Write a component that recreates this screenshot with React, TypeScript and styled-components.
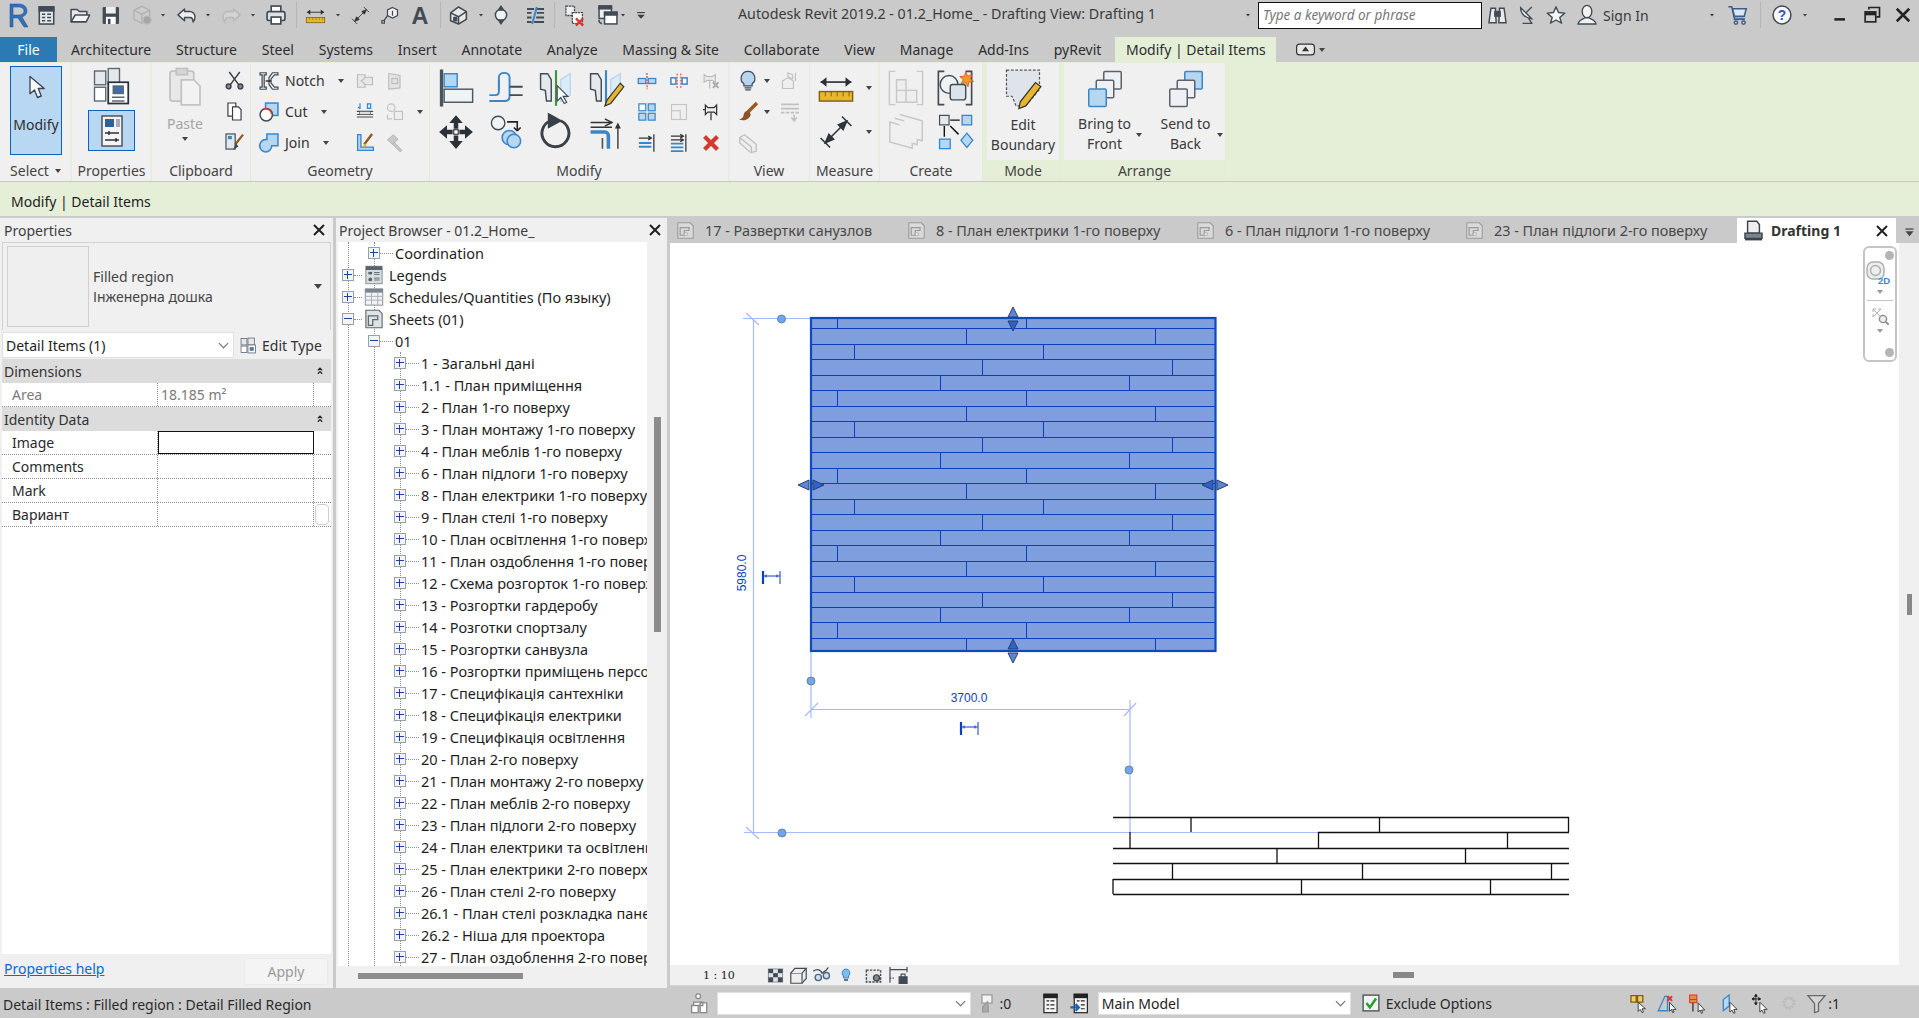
import React from "react";
import styled, { createGlobalStyle } from "styled-components";

const UI_FONT = `"Noto Sans", "Open Sans", "Liberation Sans", sans-serif`;
const DK = "#414b55";
const MD = "#87919b";
const LT = "#e6e9ec";
const BL = "#3a86c8";
const LB = "#b7d7f1";
const RED = "#d8382c";

const GlobalStyle = createGlobalStyle`
    html, body { margin: 0; padding: 0; height: 100%; overflow: hidden; background: #cacaca; }
    #root { height: 100%; }
    * { box-sizing: border-box; }
`;

// every drawing sits on a 32x32 grid and gets scaled by the size prop
const art: Record<string, React.ReactNode> = {
    caret: <polygon points="8,12 24,12 16,22" fill="#3c3c3c" />,
    project: (<g stroke={DK} strokeWidth="2.4"><rect x="5" y="3" width="22" height="26" fill={LT} /><rect x="5" y="3" width="22" height="6" fill={DK} /><path d="M9 14h5M17 14h6M9 19h5M17 19h6M9 24h5M17 24h6" /></g>),
    open: (<g stroke={DK} strokeWidth="2.2" fill="#e8e8e8" strokeLinejoin="round"><path d="M3 26V8h9l3 3h11v5" /><path d="M9 16h21l-5 10H3z" fill="#f4f4f4" /></g>),
    save: (<g><rect x="4" y="3" width="25" height="26" rx="2" fill={DK} /><rect x="9" y="3" width="15" height="10" fill="#eee" /><rect x="9" y="18" width="15" height="11" fill="#fff" /><rect x="12" y="21" width="4" height="8" fill={DK} /></g>),
    sync: (<g fill="#cfcfcf" stroke="#9c9c9c" strokeWidth="2"><polygon points="15,2 27,8 27,22 15,28 3,22 3,8" /><path d="M3 8l12 6 12-6M15 14v14" fill="none" /><circle cx="23" cy="23" r="6" fill="#888" stroke="#aaa" /></g>),
    undo: (<path d="M13 6 3 15l10 9v-5h8c3 0 5 2 5 7 2-2 3-5 3-8 0-5-4-8-8-8h-8z" fill="#eee" stroke={DK} strokeWidth="2.2" strokeLinejoin="round" />),
    redo: (<path d="M19 6l10 9-10 9v-5h-8c-3 0-5 2-5 7-2-2-3-5-3-8 0-5 4-8 8-8h8z" fill="#ddd" stroke="#aaa" strokeWidth="2.2" strokeLinejoin="round" />),
    print: (<g stroke={DK} strokeWidth="2.4"><rect x="9" y="3" width="14" height="9" fill="#fff" /><rect x="3" y="11" width="26" height="13" rx="3" fill="#dfe2e5" /><rect x="9" y="19" width="14" height="10" fill="#fff" /></g>),
    ruler: (<g><path d="M3 11h26" stroke="#2b2f33" strokeWidth="1.4" /><path d="M3 11l5-4v8zM29 11l-5-4v8z" fill="#2b2f33" /><rect x="2" y="19" width="28" height="8" fill="#e7b72e" stroke="#80620f" strokeWidth="1.2" /><path d="M7 19v4M12 19v4M17 19v4M22 19v4M27 19v4" stroke="#80620f" strokeWidth=".8" /></g>),
    align2: (<g stroke="#2f353b" strokeWidth="1.3"><path d="M7 25 25 7M3 21l8 8M21 3l8 8" /><polygon points="7,25 14,22 10,18" fill="#2f353b" /><polygon points="25,7 18,10 22,14" fill="#2f353b" /></g>),
    tag: (<g stroke={DK} strokeWidth="2" fill="#f2f2f2"><polygon points="20,4 28,8 28,17 20,21 12,17 12,8" /><path d="M20 9v8M5 27l7-10" /><rect x="3" y="25" width="4" height="4" /></g>),
    textA: (<text x="16" y="29" fontSize="34" fontWeight="700" textAnchor="middle" fill={DK} fontFamily="Liberation Sans, sans-serif">A</text>),
    house: (<g stroke={DK} strokeWidth="2.4" fill="#e8e8e8" strokeLinejoin="round"><polygon points="4,12 16,3 28,10 28,22 16,29 4,24" /><path d="M4 12l12 6 12-8M16 18v11" fill="none" /><rect x="9" y="19" width="4" height="5" fill={DK} /></g>),
    section: (<g stroke={DK} strokeWidth="2.4"><circle cx="16" cy="16" r="9" fill="#f2f2f2" /><polygon points="16,2 12,8 20,8" fill={DK} /><polygon points="16,30 12,24 20,24" fill={DK} /></g>),
    thin: (<g stroke={DK} strokeWidth="3"><path d="M3 6h11M18 6h11M3 12h7M18 12h11M3 19h7M17 19h12M3 26h7M14 26h15" /><path d="M18 3 11 29" stroke={BL} /></g>),
    closeinact: (<g><rect x="4" y="3" width="12" height="13" fill="#eee" stroke={DK} strokeWidth="1.8" strokeDasharray="3 1" /><rect x="13" y="12" width="14" height="15" fill="#fff" stroke={DK} strokeWidth="1.8" strokeDasharray="3 1" /><path d="M18 20l10 10M28 20 18 30" stroke={RED} strokeWidth="3.2" /></g>),
    tabs: (<g stroke={DK} strokeWidth="2.2"><rect x="3" y="3" width="18" height="18" fill="#eee" /><rect x="3" y="3" width="18" height="4" fill={DK} /><rect x="11" y="12" width="18" height="17" fill="#fff" /><rect x="11" y="12" width="18" height="4" fill={DK} /><path d="M3 26l4 3M3 26v-3" /></g>),
    custom: (<g fill="#3c3c3c"><rect x="6" y="8" width="20" height="3" /><polygon points="6,15 26,15 16,26" /></g>),
    binoc: (<g stroke={DK} strokeWidth="2.2" fill="#eaeaea"><path d="M6 5h7v7l1 15H3L5 12z" /><path d="M19 5h7l1 7 2 15H18l1-15z" /><rect x="12" y="10" width="8" height="7" fill={DK} /></g>),
    dish: (<g stroke={DK} strokeWidth="2" fill="#eee"><path d="M7 4c0 9 7 16 17 17z" /><path d="M15 12l9-9M10 28h14l-5-8" fill="none" /></g>),
    star: (<polygon points="16,3 20,12 30,13 22,20 25,29 16,24 7,29 10,20 2,13 12,12" fill="#f6f6f6" stroke={DK} strokeWidth="2.2" strokeLinejoin="round" />),
    user: (<g stroke={DK} strokeWidth="2" fill="#f2f2f2"><ellipse cx="16" cy="11" rx="7" ry="9" /><path d="M3 29c1-6 8-7 10-9h6c2 2 9 3 10 9z" /></g>),
    cart: (<g stroke="#3c5a8a" strokeWidth="2.2" fill="#dbe6f3"><path d="M2 4h5l4 18h15" fill="none" /><path d="M8 7h20l-3 11H11z" /><circle cx="13" cy="27" r="2.4" /><circle cx="24" cy="27" r="2.4" /></g>),
    help: (<g><circle cx="16" cy="16" r="13" fill="#f8f8f8" stroke={DK} strokeWidth="2.2" /><text x="16" y="23" fontSize="20" fontWeight="700" textAnchor="middle" fill="#2c55b8" fontFamily="Liberation Sans, sans-serif">?</text></g>),
    minimize: <rect x="7" y="21" width="17" height="4" fill="#222" />,
    restore: (<g fill="none" stroke="#222" strokeWidth="2.6"><rect x="5" y="11" width="17" height="16" /><path d="M5 14h17" strokeWidth="5" /><path d="M11 7V4h17v15h-5" /></g>),
    close: <path d="M6 6l20 20M26 6 6 26" stroke="#222" strokeWidth="4" />,
    pointer: (<path d="M8 2v23l6-5 4 10 5-2-4-10h8z" fill="#f6f8fa" stroke="#3c4650" strokeWidth="1.8" strokeLinejoin="round" />),
    familyType: (<g stroke="#5c6670" strokeWidth="1.1"><rect x="2" y="4" width="9" height="11" fill={LT} /><rect x="13" y="2" width="9" height="12" fill={LT} /><rect x="2" y="17" width="9" height="11" fill="#fff" /><rect x="13" y="13" width="16" height="17" fill="#fff" stroke="#2a3138" strokeWidth="1.4" /><rect x="17" y="16" width="8" height="6" fill="#3f6ea8" /><path d="M16 25h10M16 28h10" /></g>),
    propPanel: (<g><rect x="6" y="1" width="20" height="30" fill="#f4f4f4" stroke="#2a3138" strokeWidth="1.2" /><rect x="9" y="4" width="9" height="8" fill="#2f5f9c" /><rect x="20" y="4" width="4" height="8" fill="#aab" /><path d="M9 18h14M9 25h14M13 16v4M20 23v4" stroke="#2a3138" strokeWidth="1.4" /></g>),
    paste: (<g stroke="#c2c2c2" strokeWidth="1.4" fill="#e8e8e8"><rect x="4" y="4" width="19" height="24" rx="2" /><rect x="9" y="2" width="9" height="5" fill="#d5d5d5" /><path d="M13 11h10l5 5v15H13z" fill="#f2f2f2" /></g>),
    scissors: (<g stroke="#3a3f45" strokeWidth="2.2" fill="none"><path d="M8 3l14 19M24 3 10 22" /><circle cx="7" cy="25" r="3.6" fill="#889" /><circle cx="25" cy="25" r="3.6" fill="#889" /></g>),
    copy: (<g stroke="#3a3f45" strokeWidth="1.8" fill="#fff"><path d="M6 3h12v20H6z" /><path d="M13 9h9l4 4v16H13z" /></g>),
    match: (<g><rect x="3" y="3" width="14" height="23" fill="#e4e8f0" stroke={DK} strokeWidth="1.8" /><rect x="6" y="6" width="6" height="5" fill={BL} /><path d="M29 4 17 19" stroke="#8a5a20" strokeWidth="3.4" /><path d="M18 17l-4 10 8-5z" fill="#444" /></g>),
    notch: (<g stroke={DK} strokeWidth="1.8" fill="#f0f0f0"><path d="M3 4h9v3H9v18h3v3H3v-3h3V7H3z" /><path d="M29 4h-8l-5 7v10l5 7h8v-3h-5l-5-6v-6l5-6h5z" /><path d="M19 16h-8" stroke="#111" /></g>),
    cutGeo: (<g stroke={BL} strokeWidth="2.2"><rect x="11" y="3" width="18" height="18" fill={LB} /><circle cx="12" cy="20" r="9" fill="#fff" stroke={DK} /><path d="M8 12a9 9 0 0 1 12 7" stroke={RED} fill="none" /></g>),
    joinGeo: (<g stroke={BL} strokeWidth="2.2" fill={LB}><path d="M13 3h16v17H20a9 9 0 0 1-9 9A9 9 0 0 1 4 15 9 9 0 0 1 13 11z" /></g>),
    wallJoin: (<g stroke="#bbb" strokeWidth="1.8" fill="#e8e8e8"><path d="M4 6h12v20H4z" /><path d="M28 10H17l-7 6 7 6h11z" /></g>),
    wallFace: (<g stroke="#bbb" strokeWidth="1.8" fill="#e4e4e4"><path d="M6 4l18 3v20L6 29z" /><rect x="11" y="12" width="9" height="8" /></g>),
    offsetFace: (<g><path d="M3 15h26M3 20h26M3 24h26" stroke={DK} strokeWidth="1.8" /><rect x="7" y="15" width="18" height="5" fill="#ddd" stroke={DK} /><path d="M8 2v9M8 11l-3-3M20 3h5v7h-5z" stroke={BL} strokeWidth="2" fill="none" /></g>),
    joinCut: (<g stroke="#c0c0c0" strokeWidth="1.8" fill="#eee"><circle cx="10" cy="9" r="6" /><rect x="15" y="15" width="13" height="13" /><path d="M4 20v7h7" fill="none" /></g>),
    paint: (<g><path d="M4 4v24h24v-5H9V4z" fill={LB} stroke={BL} strokeWidth="2" /><path d="M26 3 14 19" stroke="#8a5a20" strokeWidth="3.6" /><path d="M15 17l-4 7 7-3z" fill="#e7b72e" /></g>),
    hammer: (<g fill="#c8c8c8" stroke="#b4b4b4" strokeWidth="1.6"><path d="M4 11 13 3l8 7-9 8z" /><path d="M15 15l12 13-3 2-12-12z" /></g>),
    alignTool: (<g stroke="#4b555f" strokeWidth="1.2"><rect x="3" y="1" width="1.6" height="30" fill="#4b555f" /><rect x="6" y="4" width="11" height="11" fill={LB} stroke={BL} /><rect x="6" y="17" width="24" height="11" fill="#f0f3f6" /></g>),
    offsetTool: (<g fill="none" strokeWidth="1.6"><path d="M2 27h13c2 0 4-1 4-4V7c0-5-9-5-9 0v12c0 2-1 3-3 3H2" stroke={BL} /><path d="M19 15h11M19 22h11" stroke={DK} /><path d="M10 9v9" stroke={BL} /></g>),
    mirrorPick: (<g><path d="M3 4h6l3 5v18H8l-1-9-4-1z" fill={LT} stroke={DK} strokeWidth="1.2" /><path d="M16 1v30" stroke="#3a9a3a" strokeWidth="1.8" /><path d="M20 9l8-5v18l-8 5z" fill="#dbecf8" stroke={LB} strokeWidth="1.2" /><path d="M17 14v13l3-3 3 5 2-1-3-5h4z" fill="#fff" stroke={DK} strokeWidth="1" /></g>),
    mirrorDraw: (<g><path d="M3 4h6l3 5v18H8l-1-9-4-1z" fill={LT} stroke={DK} strokeWidth="1.2" /><path d="M16 1v28" stroke={BL} strokeWidth="1.8" /><path d="M20 9l8-5v14l-8 5z" fill="#dbecf8" stroke={LB} strokeWidth="1.2" /><path d="M28 12 17 26l-2 5 5-2 11-14z" fill="#e7b72e" stroke="#333" strokeWidth="1" /></g>),
    move: (<g fill="#2c3137"><rect x="14" y="14" width="4" height="4" fill="#fff" stroke="#2c3137" /><path d="M16 1l6 7h-4v5h-4V8h-4zM16 31l-6-7h4v-5h4v5h4zM1 16l7-6v4h5v4H8v4zM31 16l-7 6v-4h-5v-4h5v-4z" /></g>),
    copyTool: (<g><circle cx="9" cy="8" r="6" fill="#f0f3f6" stroke={DK} strokeWidth="1.2" /><path d="M17 7h9v8M26 15l-3-3M26 15l3-3" stroke="#222" strokeWidth="1.4" fill="none" /><circle cx="19" cy="21" r="6.4" fill={LB} stroke={BL} strokeWidth="1.4" /><circle cx="23" cy="24" r="6" fill={LB} stroke={BL} strokeWidth="1.4" /></g>),
    rotate: (<g fill="none" stroke="#3a4047" strokeWidth="2.6"><path d="M11 6a12 12 0 1 0 9 0" /><polygon points="10,1 19,6 10,11" fill="#3a4047" /></g>),
    trim: (<g><path d="M3 8h18M3 12h18" stroke="#333" strokeWidth="1.2" /><path d="M15 5l6 3-6 3" fill="none" stroke="#333" strokeWidth="1.2" /><path d="M3 16h12c2 0 3 2 3 3v11" stroke={BL} strokeWidth="3" fill="none" /><path d="M13 21v9M26 30V12" stroke="#555" strokeWidth="1.4" /><polygon points="26,8 23.5,13 28.5,13" fill="#333" /></g>),
    splitTool: (<g><rect x="2" y="12" width="12" height="8" fill={LB} stroke={BL} strokeWidth="2" /><rect x="18" y="12" width="12" height="8" fill={LB} stroke={BL} strokeWidth="2" /><path d="M16 3v26" stroke={RED} strokeWidth="2" strokeDasharray="3 2" /></g>),
    gapTool: (<g><rect x="3" y="11" width="8" height="10" fill="#fff" stroke={BL} strokeWidth="2.4" /><rect x="21" y="11" width="8" height="10" fill="#fff" stroke={BL} strokeWidth="2.4" /><path d="M13 4v24M19 4v24" stroke={RED} strokeWidth="1.6" strokeDasharray="3 2" /></g>),
    unpin: (<g><path d="M5 6l5 3h8l5-3v12l-5-3h-8l-5 3z" fill="#eee" stroke="#b8b8b8" strokeWidth="1.8" /><path d="M14 16v12" stroke="#b8b8b8" strokeWidth="1.8" /><path d="M19 18l9 9M28 18l-9 9" stroke="#a8a8a8" strokeWidth="3" /></g>),
    array: (<g strokeWidth="2"><rect x="3" y="3" width="11" height="11" fill="#fff" stroke={BL} /><rect x="18" y="3" width="11" height="11" fill={LB} stroke={BL} /><rect x="3" y="18" width="11" height="11" fill={LB} stroke={BL} /><rect x="18" y="18" width="11" height="11" fill={LB} stroke={BL} /></g>),
    scale: (<g stroke="#c4c4c4" strokeWidth="1.8" fill="#efefef"><rect x="4" y="4" width="24" height="24" /><rect x="4" y="14" width="14" height="14" /></g>),
    pin: (<g stroke="#333" strokeWidth="2" fill="#eee"><path d="M7 5l4 4h10l4-4v15l-4-4H11l-4 4z" /><path d="M16 17v12M3 12h4" fill="none" /></g>),
    extend1: (<g strokeWidth="2"><path d="M27 2v28" stroke="#333" /><path d="M3 8h20M18 5l5 3-5 3" fill="none" stroke="#333" /><path d="M3 16h20M3 22h20" stroke={BL} strokeWidth="3" /></g>),
    extend2: (<g strokeWidth="2"><path d="M27 2v28" stroke="#333" /><path d="M3 5h20M18 2l5 3-5 3M3 11h20M18 8l5 3-5 3" fill="none" stroke="#333" /><path d="M3 17h20M3 23h20M3 29h20" stroke={BL} strokeWidth="3" /></g>),
    deleteX: <path d="M4 8l4-4 8 8 8-8 4 4-8 8 8 8-4 4-8-8-8 8-4-4 8-8z" fill={RED} stroke="#a52018" />,
    bulb: (<g stroke={DK} strokeWidth="1.8"><path d="M16 2a10 10 0 0 1 6 18v3H10v-3A10 10 0 0 1 16 2z" fill={LB} /><path d="M11 26h10M12 29h8" /></g>),
    hideIso: (<g stroke="#c0c0c0" strokeWidth="1.6" fill="#eee"><path d="M5 16l8-5 8 5v11H5z" /><path d="M13 4l7 3v6l-7-3zM24 4v12" /></g>),
    brush: (<g><path d="M29 3 16 16" stroke="#9a5a20" strokeWidth="5" /><path d="M16 14c-6 0-6 6-7 9-1 2-4 3-6 4 7 3 16 0 17-8z" fill="#8a5226" /></g>),
    graphics: (<g stroke="#c0c0c0" strokeWidth="2.4"><path d="M3 5h26M3 11h26" /><path d="M3 17h26" strokeDasharray="5 2" /><path d="M22 20v8M18 24l4 5 4-5" fill="none" /></g>),
    wire: (<g stroke="#bdbdbd" strokeWidth="1.8" fill="#eee"><path d="M4 8l7-4 17 14v10l-8 2L4 16z" /><path d="M4 8l17 14v8" fill="none" /></g>),
    createGroupOff: (<g stroke="#c8c8c8" strokeWidth="1.2" fill="#eee"><path d="M7 2H2v28h5M25 2h5v28h-5" fill="none" /><path d="M8 9h8v9H8zM8 18h8v10H8zM16 18h9v10h-9z" /></g>),
    createSimilar: (<g><path d="M7 2H2v28h5M25 2h5v28h-5" fill="none" stroke={DK} strokeWidth="1.4" /><circle cx="11" cy="13" r="7.5" fill="#eef2f5" stroke={DK} strokeWidth="1.2" /><rect x="12" y="13" width="13" height="13" rx="2" fill="#dde3ea" stroke={DK} strokeWidth="1.2" /><path d="M25 2l1.6 4 4-1.6-1.6 4 2.6 2-4 .6-.6 4-2-3.4-4 1 2-3.6-3-2.6 4-.4z" fill="#f29a1e" stroke={RED} strokeWidth=".6" /></g>),
    partsOff: (<g stroke="#c8c8c8" strokeWidth="1.2" fill="#f0f0f0"><path d="M3 8l18 5v16L3 24z" /><path d="M7 5l18 5v16l-4-1" /><path d="M11 2l18 5v16l-4-1" /></g>),
    flow: (<g><rect x="3" y="2" width="8" height="8" fill={LT} stroke={DK} strokeWidth="1" /><rect x="22" y="2" width="8" height="8" fill={LB} stroke={BL} strokeWidth="1.1" /><rect x="3" y="22" width="9" height="8" fill={LB} stroke={BL} strokeWidth="1.1" /><polygon points="26,17 31,23 26,29 21,23" fill={LB} stroke={BL} strokeWidth="1.1" /><path d="M12 6h8M7 11v9M12 11l7 7" stroke="#111" strokeWidth="1.2" /></g>),
    editBoundary: (<g><path d="M4 3h24v14l-10 12H11l-3-7H4z" fill="#dfe3ea" stroke="#555" strokeWidth=".9" strokeDasharray="2 1.2" /><path d="M29 15 18 29l-5 2 1-5 11-14z" fill="#e7b72e" stroke="#333" strokeWidth=".9" /></g>),
    front: (<g strokeWidth="1.2"><rect x="15" y="2" width="14" height="14" rx="1" fill="#eef0f3" stroke="#5a636c" /><rect x="9" y="9" width="14" height="14" rx="1" fill="#eef0f3" stroke="#5a636c" /><rect x="3" y="16" width="14" height="14" rx="1" fill={LB} stroke={BL} /></g>),
    back: (<g strokeWidth="1.2"><rect x="15" y="2" width="14" height="14" rx="1" fill={LB} stroke={BL} /><rect x="9" y="9" width="14" height="14" rx="1" fill="#eef0f3" stroke="#5a636c" /><rect x="3" y="16" width="14" height="14" rx="1" fill="#eef0f3" stroke="#5a636c" /></g>),
    sheet: (<g><path d="M3 3h21l5 5v21H3z" fill="#dadada" stroke="#9a9a9a" strokeWidth="1.8" /><path d="M7 24V11h15v5h-8v8z" fill="none" stroke="#9a9a9a" strokeWidth="2" /><path d="M14 20h5v4h-5z" fill="#fff" stroke="#9a9a9a" strokeWidth="1.2" /></g>),
    sheetDark: (<g><path d="M3 2h21l5 5v23H3z" fill="#dfe3e6" stroke="#5e6870" strokeWidth="1.8" /><path d="M7 26V11h15v6h-8v9z" fill="none" stroke="#5e6870" strokeWidth="2" /></g>),
    legends: (<g><rect x="3" y="2" width="26" height="28" fill="#d8dde1" stroke="#7b858e" strokeWidth="1.4" /><rect x="3" y="2" width="26" height="6" fill="#59636c" /><rect x="7" y="11" width="6" height="4" fill="#59636c" /><path d="M16 12h9M16 15h9M16 21h9M16 24h9" stroke="#59636c" strokeWidth="1.4" /><circle cx="10" cy="23" r="3" fill="#59636c" /></g>),
    schedule: (<g><rect x="2" y="3" width="28" height="26" fill="#f0f2f4" stroke="#7b858e" strokeWidth="1.4" /><rect x="2" y="3" width="28" height="6" fill="#7b858e" /><path d="M2 15h28M2 21h28M12 9v20M22 9v20" stroke="#a4acb3" strokeWidth="1.4" /></g>),
    drafting: (<g stroke="#3a424a" strokeWidth="2.2" fill="#eee"><path d="M7 2h14l4 5v13H7z" /><path d="M3 20h26v8H3z" fill="#7a848d" /><path d="M3 30h26" /></g>),
    editType: (<g stroke="#5c6670" strokeWidth="1.5"><rect x="2" y="3" width="11" height="12" fill={LT} /><rect x="15" y="2" width="12" height="13" fill={LT} /><rect x="2" y="17" width="11" height="12" fill="#fff" /><rect x="15" y="15" width="14" height="15" fill="#fff" /><rect x="19" y="20" width="6" height="5" fill={BL} /></g>),
    collapse: <path d="M9 14l7-7 7 7M9 25l7-7 7 7" fill="none" stroke="#222" strokeWidth="4" />,
    menu: (<g fill="#444"><rect x="6" y="6" width="20" height="3" /><polygon points="6,13 26,13 16,25" /></g>),
    panelToggle: (<g><rect x="1" y="7" width="30" height="18" rx="5" fill="#e8e8e8" stroke="#333" strokeWidth="2" /><polygon points="16,11 22,19 10,19" fill="#333" /></g>),
    detail: (<g><rect x="4" y="5" width="24" height="22" fill="#e2e2e2" stroke={MD} strokeWidth="1.6" /><rect x="4" y="5" width="8" height="7" fill={DK} /><rect x="20" y="5" width="8" height="7" fill={DK} /><rect x="12" y="12" width="8" height="7" fill={DK} /><rect x="4" y="19" width="8" height="8" fill={DK} /><rect x="20" y="19" width="8" height="8" fill={DK} /></g>),
    cube: (<g stroke={DK} strokeWidth="2" fill="#eee"><path d="M3 12h19v17H3z" /><path d="M3 12l7-8h19l-7 8M29 4v17l-7 8" /></g>),
    sun: (<g fill="none" strokeWidth="2.2"><path d="M2 10c7-5 12-2 14 3 4-2 8-5 10-9" stroke={DK} /><circle cx="10" cy="20" r="5" stroke="#4a6a88" fill="#cfe0ee" /><circle cx="23" cy="17" r="5" stroke="#4a6a88" fill="#cfe0ee" /></g>),
    bulbBlue: (<g><path d="M16 4a8 8 0 0 1 5 14v4H11v-4A8 8 0 0 1 16 4z" fill="#7dbcf0" stroke="#3a86c8" strokeWidth="2" /><path d="M12 26h8" stroke={DK} strokeWidth="3" /></g>),
    crop: (<g stroke={DK} strokeWidth="2.4"><rect x="4" y="7" width="24" height="20" fill="#e8e8e8" strokeDasharray="4 2" /><circle cx="21" cy="20" r="5" fill="#888" /></g>),
    viewLock: (<g stroke={DK} strokeWidth="1.8"><path d="M3 3v24M29 3v8M3 7h26" fill="none" /><path d="M3 20h8" strokeDasharray="2 2" /><rect x="17" y="18" width="12" height="10" fill={DK} /><path d="M20 18v-4h6v4" fill="none" /></g>),
    worksets: (<g fill="#fff" stroke="#8a8a8a" strokeWidth="2"><circle cx="14" cy="5" r="3.6" /><path d="M7 14h14v5H7zM4 19h10v11H4zM17 15h10v15H17z" /></g>),
    editReq: (<g fill="#aaa" stroke="#9a9a9a" strokeWidth="2"><path d="M8 3h16v13H8z" fill="#f4f4f4" /><path d="M17 14l-8 8v8h9v-8z" /></g>),
    wsA: (<g stroke="#222" strokeWidth="1.8"><rect x="6" y="2" width="20" height="28" fill="#f4f4f4" /><rect x="6" y="2" width="20" height="5" fill="#222" /><path d="M10 12h4M16 12h6M10 18h4M16 18h6M10 24h4M16 24h6" /></g>),
    wsB: (<g stroke="#222" strokeWidth="1.8"><rect x="8" y="2" width="20" height="28" fill="#f4f4f4" /><rect x="8" y="2" width="20" height="5" fill="#222" /><path d="M12 12h4M18 12h6M18 18h6M18 24h6" /><path d="M2 22h12M10 17l5 5-5 5" stroke="#1d5fb0" strokeWidth="3.4" fill="none" /></g>),
    check: (<g><rect x="2" y="2" width="28" height="28" fill="#eef3f6" stroke="#4a5157" strokeWidth="2.4" /><path d="M8 16l6 8 11-16" fill="none" stroke="#2a9a28" strokeWidth="4.4" /></g>),
    stLinks: (<g><path d="M3 4h8v10H3zM13 4h8v10h-8z" fill="#f2cf60" stroke="#7a6010" strokeWidth="2" /><path d="M14 14v14l3-3 3 5 2-1-2-5h5z" fill="#fff" stroke="#333" strokeWidth="1.4" /></g>),
    stUnder: (<g><path d="M2 27 12 5h4v22z" fill="none" stroke={BL} strokeWidth="2" /><path d="M16 5l7 7M23 5l-7 7" stroke={RED} strokeWidth="3" /><path d="M19 14v14l3-3 2 5 2-1-2-4h5z" fill="#fff" stroke="#333" strokeWidth="1.4" /></g>),
    stPin: (<g><path d="M4 3h11v7H4zM4 10h11v5H4z" fill="#e09040" stroke={RED} strokeWidth="1.6" /><path d="M9 15v13" stroke="#333" strokeWidth="2" /><path d="M17 15v14l3-3 2 5 2-1-2-4h5z" fill="#fff" stroke="#333" strokeWidth="1.4" /></g>),
    stFace: (<g><path d="M5 27V10l9-7v17z" fill={LB} stroke={BL} strokeWidth="2" /><path d="M15 14v15l3-3 3 5 2-1-2-5h5z" fill="#fff" stroke="#333" strokeWidth="1.4" /></g>),
    stDrag: (<g><path d="M9 2v16M3 9h13M9 2l-2 3h4zM3 9l3-2v4zM16 9l-3-2v4zM9 18l-2-3h4z" stroke="#222" strokeWidth="1.4" /><path d="M15 14v15l3-3 3 5 2-1-2-5h5z" fill="#fff" stroke="#333" strokeWidth="1.4" /></g>),
    stGear: <circle cx="16" cy="16" r="9" fill="none" stroke="#bbb" strokeWidth="5" strokeDasharray="4 1.5" />,
    funnel: (<g fill="#d6d6d6" stroke="#6a6a6a" strokeWidth="2"><path d="M3 4h26L19 16v12l-6 2V16z" /></g>),
};

const Glyph = styled.svg<{ $faded?: boolean }>`
    display: block;
    flex: none;
    overflow: visible;
    opacity: ${(p) => (p.$faded ? 0.55 : 1)};
`;

function Icon({ name, size = 24, faded }: { name: string; size?: number; faded?: boolean }) {
    return (
        <Glyph width={size} height={size} viewBox="0 0 32 32" $faded={faded}>
            {art[name]}
        </Glyph>
    );
}

// a strip of icons given by their centre on the x axis: the gaps come out of the table
const RunRow = styled.div`
    display: flex;
    align-items: center;
    flex: none;
`;

const RunSlot = styled.div<{ $w: number; $gap: number }>`
    flex: none;
    width: ${(p) => p.$w}px;
    margin-left: ${(p) => p.$gap}px;
    display: flex;
    justify-content: center;
`;

type RunItem = [string, number, number?, boolean?];

function IconRun({ items, origin }: { items: RunItem[]; origin: number }) {
    let cursor = origin;
    return (
        <RunRow>
            {items.map(([name, x, size = 20, faded], i) => {
                const gap = x - size / 2 - cursor;
                cursor = x + size / 2;
                return (
                    <RunSlot key={i} $w={size} $gap={gap}>
                        <Icon name={name} size={size} faded={faded} />
                    </RunSlot>
                );
            })}
        </RunRow>
    );
}

const Screen = styled.div`
    width: 1919px;
    height: 1018px;
    display: flex;
    flex-direction: column;
    font-family: ${UI_FONT};
    font-size: 14px;
    color: #2e2e2e;
    background: #cacaca;
    overflow: hidden;
`;

/* title bar */
const TitleBar = styled.div`
    flex: none;
    height: 37px;
    padding-bottom: 7px;
    display: grid;
    grid-template-columns: 738px 506px 1fr;
    align-items: center;
`;

const TitleText = styled.div`
    margin-top: -4px;
    font-size: 14.25px;
    white-space: nowrap;
    color: #3a3a3a;
`;

const TitleTools = styled.div`
    display: flex;
    align-items: center;
`;

const SearchBox = styled.div`
    flex: none;
    width: 224px;
    height: 27px;
    margin-left: 6px;
    padding-left: 4px;
    display: flex;
    align-items: center;
    background: #fff;
    border: 1.5px solid #111;
    font-size: 13.5px;
    font-style: italic;
    color: #777;
`;

const SignIn = styled.div`
    flex: none;
    width: 54px;
    margin-left: 5px;
    color: #3a3a3a;
`;

const Divider = styled.div`
    flex: none;
    width: 1px;
    height: 26px;
    background: #b4b4b4;
`;

/* ribbon tabs */
const TabStrip = styled.div`
    flex: none;
    height: 25px;
    display: flex;
    align-items: stretch;
`;

const FileTab = styled.div`
    flex: none;
    width: 57px;
    margin-right: 14px;
    display: flex;
    align-items: center;
    justify-content: center;
    background: #2a7ab4;
    color: #fff;
`;

const TabList = styled.div`
    display: flex;
    gap: 24.8px;
    align-items: center;
    white-space: nowrap;
`;

const ContextTab = styled.div`
    flex: none;
    width: 161px;
    margin-left: 14px;
    display: flex;
    align-items: center;
    justify-content: center;
    background: #e5efd8;
    white-space: nowrap;
`;

const ToggleSlot = styled.div`
    flex: none;
    margin-left: 20px;
    display: flex;
    align-items: center;
    gap: 4px;
`;

/* ribbon */
const Ribbon = styled.div`
    flex: none;
    height: 120px;
    padding-top: 1px;
    display: flex;
    background: #e5efd8;
    border-bottom: 1px solid #c6cabf;
`;

const Panel = styled.div<{ $w: number; $space?: number }>`
    flex: none;
    width: ${(p) => p.$w}px;
    margin-left: ${(p) => p.$space ?? 0}px;
    display: flex;
    flex-direction: column;
    border-right: 1px solid #e3ebd8;
`;

const PanelBody = styled.div`
    flex: none;
    height: 97px;
    display: flex;
    background: #f0f0f0;
`;

const PanelLabel = styled.div<{ $ctx?: boolean }>`
    flex: none;
    height: 21px;
    display: flex;
    align-items: center;
    justify-content: center;
    gap: 6px;
    color: #444;
    background: ${(p) => (p.$ctx ? "#e5efd8" : "#f0f0f0")};
`;

const ModifyButton = styled.div`
    flex: none;
    width: 52px;
    height: 89px;
    margin: 3px 0 0 10px;
    padding-top: 8px;
    display: flex;
    flex-direction: column;
    align-items: center;
    gap: 16px;
    background: #b8d7f3;
    border: 1.5px solid #0e5fc0;
`;

const StackCenter = styled.div<{ $w?: number }>`
    flex: ${(p) => (p.$w ? "none" : 1)};
    width: ${(p) => (p.$w ? `${p.$w}px` : "auto")};
    padding-top: 3px;
    display: flex;
    flex-direction: column;
    align-items: center;
`;

const PressedSquare = styled.div`
    width: 47px;
    height: 41px;
    margin-top: 4px;
    display: flex;
    align-items: center;
    justify-content: center;
    background: #b8d7f3;
    border: 1.5px solid #0e5fc0;
`;

const MutedWord = styled.div`
    margin: 8px 0 4px;
    color: #a5a5a5;
`;

const Cells = styled.div<{ $cols: string; $rows: string; $top?: number }>`
    flex: none;
    display: grid;
    grid-template-columns: ${(p) => p.$cols};
    grid-template-rows: ${(p) => p.$rows};
    padding-top: ${(p) => p.$top ?? 2}px;
    place-items: center;
`;

const ToolRow = styled.div`
    justify-self: start;
    padding-left: 7px;
    display: flex;
    align-items: center;
    gap: 5px;
    color: #333;
`;

const ToolCaret = styled.span`
    width: 0;
    height: 0;
    margin-left: 8px;
    border-left: 3.5px solid transparent;
    border-right: 3.5px solid transparent;
    border-top: 4px solid #444;
`;

const BigTool = styled.div`
    flex: none;
    width: 81px;
    padding-top: 6px;
    position: relative;
    display: flex;
    flex-direction: column;
    align-items: center;
`;

const BigToolText = styled.div`
    margin-top: 5px;
    line-height: 20px;
    text-align: center;
    color: #3a3a3a;
`;

const BigToolCaret = styled(ToolCaret)`
    position: absolute;
    right: 3px;
    top: 70px;
`;

const OptionsBar = styled.div`
    flex: none;
    height: 34px;
    padding: 4px 0 0 11px;
    display: flex;
    align-items: center;
    background: #e5efd8;
    color: #222;
`;

/* lower part of the window */
const Workspace = styled.div`
    flex: 1;
    min-height: 0;
    display: flex;
`;

const Dock = styled.div<{ $w: number }>`
    flex: none;
    width: ${(p) => p.$w}px;
    margin: 2px 3px 0 0;
    display: flex;
    flex-direction: column;
    background: #f0f0f0;
`;

const DockHeader = styled.div<{ $inset: number; $end: number }>`
    flex: none;
    height: 24px;
    padding: 0 ${(p) => p.$end}px 0 ${(p) => p.$inset}px;
    display: flex;
    align-items: center;
    justify-content: space-between;
    color: #404040;
`;

const TypeCard = styled.div`
    flex: none;
    height: 88px;
    margin: 0 2px;
    padding: 4px;
    display: flex;
    align-items: center;
    gap: 4px;
    border: 1px solid #d2d2d2;
    border-bottom: none;
`;

const TypeThumb = styled.div`
    flex: none;
    width: 82px;
    height: 81px;
    background: #efefef;
    border: 1px solid #cfcfcf;
`;

const TypeName = styled.div`
    flex: 1;
    line-height: 20px;
    color: #444;
`;

const TypeCaret = styled(ToolCaret)`
    margin: 0 4px 0 0;
    border-left-width: 4.5px;
    border-right-width: 4.5px;
    border-top-width: 5px;
`;

const SelectorRow = styled.div`
    flex: none;
    height: 26px;
    margin: 2px 2px 1px;
    display: flex;
    align-items: center;
`;

const Select = styled.div<{ $w: number; $h?: number }>`
    flex: none;
    width: ${(p) => p.$w}px;
    height: ${(p) => p.$h ?? 26}px;
    padding: 0 6px 0 3px;
    display: flex;
    align-items: center;
    justify-content: space-between;
    background: #fff;
    border: 1px solid #e0e0e0;
    color: #222;
`;

const Chevron = styled.span`
    width: 7px;
    height: 7px;
    margin: -4px 0 0;
    border-right: 1px solid #666;
    border-bottom: 1px solid #666;
    transform: rotate(45deg);
`;

const EditType = styled.div`
    flex: none;
    margin-left: 6px;
    display: flex;
    align-items: center;
    gap: 5px;
    color: #333;
`;

const GroupRow = styled.div`
    flex: none;
    height: 24px;
    margin: 0 2px;
    padding: 0 6px 0 2px;
    display: flex;
    align-items: center;
    justify-content: space-between;
    background: #dcdcdc;
    color: #333;
`;

const PropRow = styled.div`
    flex: none;
    height: 24px;
    margin: 0 2px;
    display: grid;
    grid-template-columns: 156px 156px 16px;
    background: #fff;
    border-bottom: 1px dotted #8a8a8a;
`;

const PropName = styled.div<{ $muted?: boolean }>`
    padding-left: 10px;
    display: flex;
    align-items: center;
    color: ${(p) => (p.$muted ? "#7a7a7a" : "#2a2a2a")};
    border-right: 1px dotted #8a8a8a;
`;

const PropValue = styled.div<{ $active?: boolean; $muted?: boolean }>`
    padding-left: 3px;
    display: flex;
    align-items: center;
    color: ${(p) => (p.$muted ? "#7a7a7a" : "#2a2a2a")};
    border-right: 1px dotted #8a8a8a;
    outline: ${(p) => (p.$active ? "1.5px solid #111" : "none")};
    outline-offset: -1px;
`;

const PropExtra = styled.div`
    padding: 1px;
    display: flex;
`;

const Knob = styled.div`
    flex: 1;
    background: #fff;
    border: 1px solid #cfcfcf;
    border-radius: 4px;
`;

const PropsFill = styled.div`
    flex: 1;
    margin: 0 2px;
    background: #fff;
`;

const PropsFooter = styled.div`
    flex: none;
    height: 34px;
    padding: 0 5px 0 4px;
    display: flex;
    align-items: center;
    justify-content: space-between;
`;

const HelpLink = styled.a`
    margin-top: -6px;
    color: #0a6ad0;
    text-decoration: underline;
`;

const ApplyButton = styled.div`
    width: 84px;
    height: 27px;
    display: flex;
    align-items: center;
    justify-content: center;
    border-radius: 3px;
    background: #f4f4f4;
    border: 1px solid #eaeaea;
    color: #9a9a9a;
`;

/* project browser */
const TreeArea = styled.div`
    flex: 1;
    min-height: 0;
    display: flex;
    padding-left: 2px;
`;

const Tree = styled.div`
    flex: none;
    width: 309px;
    position: relative;
    overflow: hidden;
    background: #fff;
`;

const TreeRow = styled.div<{ $depth: number }>`
    height: 22px;
    padding-left: ${(p) => 4 + p.$depth * 26}px;
    position: relative;
    display: flex;
    align-items: center;
    white-space: nowrap;
    font-size: 14.5px;
    color: #1e1e1e;
`;

const TreeIconLabel = styled.span`
    margin-left: 5px;
`;

const Expander = styled.div<{ $open?: boolean }>`
    flex: none;
    width: 12px;
    height: 12px;
    position: relative;
    background: #f2f4f6;
    border: 1px solid #98a0a8;

    &::before {
        content: "";
        position: absolute;
        left: 1px;
        right: 1px;
        top: 4px;
        height: 1px;
        background: #22409a;
    }

    &::after {
        content: "";
        display: ${(p) => (p.$open ? "none" : "block")};
        position: absolute;
        top: 1px;
        bottom: 1px;
        left: 4px;
        width: 1px;
        background: #22409a;
    }
`;

const Leader = styled.div<{ $w: number }>`
    flex: none;
    width: ${(p) => p.$w}px;
    margin: 0 2px 0 0;
    border-top: 1px dotted #8a8a8a;
`;

const Guide = styled.div<{ $x: number; $top: number }>`
    position: absolute;
    left: ${(p) => p.$x}px;
    top: ${(p) => p.$top}px;
    bottom: 0;
    border-left: 1px dotted #8a8a8a;
`;

const TreeScroll = styled.div`
    flex: 1;
    padding: 175px 6px 0 7px;
`;

const TreeThumb = styled.div`
    width: 7px;
    height: 215px;
    background: #8c8c8c;
`;

const HScrollTrack = styled.div`
    flex: none;
    height: 22px;
    padding: 7px 0 0 22px;
`;

const HScrollThumb = styled.div`
    width: 165px;
    height: 6px;
    background: #8c8c8c;
`;

/* view */
const ViewColumn = styled.div`
    flex: 1;
    min-width: 0;
    display: flex;
    flex-direction: column;
`;

const ViewTabs = styled.div`
    flex: none;
    height: 27px;
    padding-left: 6px;
    display: flex;
    align-items: flex-end;
`;

const ViewTab = styled.div<{ $w: number }>`
    flex: none;
    width: ${(p) => p.$w}px;
    height: 25px;
    display: flex;
    align-items: center;
    gap: 10px;
    white-space: nowrap;
    font-size: 14.4px;
    color: #484848;
`;

const ActiveTab = styled.div`
    flex: none;
    width: 159px;
    height: 25px;
    padding: 0 6px;
    display: flex;
    align-items: center;
    gap: 7px;
    background: #fff;
    font-weight: 700;
    color: #333;
`;

const ActiveTabClose = styled.div`
    margin-left: auto;
`;

const TabMenu = styled.div`
    margin: 0 0 4px 7px;
`;

const ViewMiddle = styled.div`
    flex: none;
    height: 722px;
    display: flex;
`;

const Canvas = styled.div`
    flex: none;
    width: 1229px;
    position: relative;
    overflow: hidden;
    background: #fff;
`;

const VStrip = styled.div`
    flex: 1;
    padding: 351px 7px 0 8px;
    background: #f0f0f0;
`;

const VThumb = styled.div`
    width: 5px;
    height: 21px;
    background: #888;
`;

const ViewBar = styled.div`
    flex: none;
    height: 21px;
    display: flex;
    align-items: center;
    background: #f0f0f0;
    border-bottom: 1px solid #d2d2d2;
`;

const ScaleText = styled.div`
    flex: none;
    width: 85px;
    padding-left: 33px;
    font-family: "DejaVu Serif", "Liberation Serif", serif;
    font-size: 11px;
    color: #222;
`;

const HThumb = styled.div`
    flex: none;
    width: 21px;
    height: 6px;
    margin-left: 484px;
    background: #888;
`;

const NavBar = styled.div`
    position: absolute;
    left: 1193px;
    top: 3px;
    width: 34px;
    height: 116px;
    padding: 3px 1px;
    display: flex;
    flex-direction: column;
    align-items: center;
    background: #fff;
    border: 2px solid #c4c4c4;
    border-radius: 6px;
`;

const NavDot = styled.div<{ $bottom?: boolean }>`
    width: 9px;
    height: 9px;
    align-self: flex-end;
    margin-top: ${(p) => (p.$bottom ? "auto" : 0)};
    border-radius: 50%;
    background: #b4b4b4;
`;

const NavRule = styled.div`
    width: 26px;
    height: 1px;
    margin: 6px 0;
    background: #c4c4c4;
`;

const NavCaret = styled(ToolCaret)`
    margin: 4px 0 0;
    border-top-color: #999;
`;

/* status bar */
const StatusBar = styled.div`
    flex: none;
    height: 30px;
    display: flex;
    align-items: center;
    background: #cacaca;
    color: #2a2a2a;
`;

const StatusText = styled.div`
    flex: none;
    width: 688px;
    padding: 2px 0 0 3px;
    white-space: nowrap;
`;

const StatusLabel = styled.div<{ $space?: number }>`
    flex: none;
    margin-left: ${(p) => p.$space ?? 0}px;
    white-space: nowrap;
`;

const Drawing = styled.svg`
    display: block;
`;

const browserRows: { label: string; depth: number; kind?: string; open?: boolean }[] = [
    { label: "Coordination", depth: 1 },
    { label: "Legends", depth: 0, kind: "legends" },
    { label: "Schedules/Quantities (По языку)", depth: 0, kind: "schedule" },
    { label: "Sheets (01)", depth: 0, kind: "sheetDark", open: true },
    { label: "01", depth: 1, open: true },
    ...[
        "1 - Загальні дані",
        "1.1 - План приміщення",
        "2 - План 1-го поверху",
        "3 - План монтажу 1-го поверху",
        "4 - План меблів 1-го поверху",
        "6 - План підлоги 1-го поверху",
        "8 - План електрики 1-го поверху",
        "9 - План стелі 1-го поверху",
        "10 - План освітлення 1-го поверху",
        "11 - План оздоблення 1-го поверху",
        "12 - Схема розгорток 1-го поверху",
        "13 - Розгортки гардеробу",
        "14 - Розготки спортзалу",
        "15 - Розгортки санвузла",
        "16 - Розгортки приміщень персоналу",
        "17 - Специфікація сантехніки",
        "18 - Специфікація електрики",
        "19 - Специфікація освітлення",
        "20 - План 2-го поверху",
        "21 - План монтажу 2-го поверху",
        "22 - План меблів 2-го поверху",
        "23 - План підлоги 2-го поверху",
        "24 - План електрики та освітлення",
        "25 - План електрики 2-го поверху",
        "26 - План стелі 2-го поверху",
        "26.1 - План стелі розкладка панелей",
        "26.2 - Ніша для проектора",
        "27 - План оздоблення 2-го поверху",
    ].map((label) => ({ label, depth: 2 })),
];

const ribbonTabs = ["Architecture", "Structure", "Steel", "Systems", "Insert", "Annotate", "Analyze", "Massing & Site", "Collaborate", "View", "Manage", "Add-Ins", "pyRevit"];

const viewTabs: [string, number][] = [
    ["17 - Развертки санузлов", 231],
    ["8 - План електрики 1-го поверху", 289],
    ["6 - План підлоги 1-го поверху", 269],
    ["23 - План підлоги 2-го поверху", 272],
];

const qatLeft: RunItem[] = [
    ["project", 46, 21], ["open", 80, 22], ["save", 110, 21], ["sync", 142, 21, true], ["caret", 163, 8],
    ["undo", 186, 21], ["caret", 208, 8], ["redo", 231, 21, true], ["caret", 253, 8], ["print", 276, 22],
];
const qatMid: RunItem[] = [["ruler", 315, 21], ["caret", 338, 8], ["align2", 360, 21], ["tag", 390, 20], ["textA", 420, 22]];
const qatEnd: RunItem[] = [["house", 458, 21], ["caret", 481, 8], ["section", 501, 20], ["thin", 535, 21]];
const qatLast: RunItem[] = [["closeinact", 574, 23], ["tabs", 607, 22], ["caret", 622, 8], ["custom", 640, 12]];

const qatRight: RunItem[] = [["binoc", 1497, 21], ["dish", 1526, 21], ["star", 1556, 20], ["user", 1587, 22]];
const winButtons: RunItem[] = [["caret", 1713, 8], ["cart", 1739, 22]];
const winRest: RunItem[] = [["help", 1783, 22], ["caret", 1806, 8], ["minimize", 1841, 20], ["restore", 1873, 20], ["close", 1904, 20]];

const viewBarIcons: RunItem[] = [["detail", 775, 19], ["cube", 798, 19], ["sun", 822, 20], ["bulbBlue", 846, 16], ["crop", 873, 19], ["viewLock", 898, 21]];

const statusIcons: RunItem[] = [["stLinks", 1642, 21], ["stUnder", 1670, 21], ["stPin", 1700, 21], ["stFace", 1733, 21], ["stDrag", 1763, 21], ["stGear", 1791, 18], ["funnel", 1819, 21]];

// plank pattern of the filled region: one row per line, joints repeat every five rows
const plankJoints = [[837, 1026], [966, 1155], [854, 1043], [982, 1172], [940, 1129]];
const plankRows = [318, 328, 344, 359, 375, 390, 406, 421, 437, 452, 468, 483, 499, 514, 530, 545, 561, 576, 592, 607, 622, 638, 651];

const FILL_LINE = "#0c3fc0";
const DIM_LINE = "#a3baff";

function Handle({ x, y }: { x: number; y: number }) {
    return <circle cx={x} cy={y} r="4" fill="#6ea6ef" stroke="#71829a" strokeWidth="1" />;
}

function Arrow({ d, dark }: { d: string; dark?: boolean }) {
    return <path d={d} fill={dark ? "#2f62c6" : "#5d85d6"} stroke="#27406f" strokeWidth="1" strokeLinejoin="round" />;
}

function EqMark({ x, y }: { x: number; y: number }) {
    return (
        <g stroke={FILL_LINE}>
            <path d={`M${x} ${y}v13`} strokeWidth="2.2" />
            <path d={`M${x + 17} ${y}v13M${x} ${y + 5}h17M${x + 3} ${y + 3.5}v3M${x + 14} ${y + 3.5}v3`} strokeWidth="1" />
        </g>
    );
}

function Plan() {
    return (
        <Drawing width="1229" height="722" viewBox="670 243 1229 722">
            <g stroke={DIM_LINE} strokeWidth="1.2" fill="none">
                <path d="M743 318.5h68M753.5 318V832M744 832.5h574M746 313l13 12M746 827l13 12" />
                <path d="M811 651v67M805 716l13-13M811 709.5h319M1124 716l12-13M1130 700v132" />
            </g>
            <g stroke="#111" strokeWidth="1.3" fill="none">
                <path d="M1113 817.5h456M1113 848.5h456M1113 863.5h456M1113 879.5h456M1113 894.5h456M1318 832.5h251" />
                <path d="M1191 817v15M1379.5 817v15M1568.5 817v15M1130 832v16M1318.5 832v16M1507.5 832v16M1277 848v15M1465.5 848v15M1172.5 863v16M1362.5 863v16M1551.5 863v16M1113 879v15M1301.5 879v15M1490.5 879v15" />
            </g>
            <rect x="811" y="318" width="404.5" height="333" fill="#7f9ede" />
            <g stroke={FILL_LINE} strokeWidth="1" fill="none">
                {plankRows.slice(1, -1).map((y) => (
                    <path key={y} d={`M811 ${y + 0.5}h404`} />
                ))}
                {plankRows.slice(0, -1).map((y, i) =>
                    plankJoints[i % 5].map((x) => <path key={`${y}-${x}`} d={`M${x + 0.5} ${y}V${plankRows[i + 1]}`} />)
                )}
            </g>
            <rect x="811" y="318" width="404.5" height="333" fill="none" stroke="#1049bc" strokeWidth="2.2" />
            <Arrow d="M1013 307l5 10h-10z" />
            <Arrow d="M1013 331l5-10h-10z" dark />
            <Arrow d="M1013 639l5 10h-10z" dark />
            <Arrow d="M1013 663l5-10h-10z" />
            <Arrow d="M798 485l11-5v10z" />
            <Arrow d="M824 485l-11-5v10z" dark />
            <Arrow d="M1202 485l11-5v10z" dark />
            <Arrow d="M1228 485l-11-5v10z" />
            <Handle x={781.5} y={319} />
            <Handle x={811} y={681} />
            <Handle x={1129} y={770} />
            <Handle x={782} y={833} />
            <text x="969" y="702" fontSize="12" textAnchor="middle" fill="#0c3fc0" fontFamily="Liberation Sans, sans-serif">3700.0</text>
            <text x="746" y="573" fontSize="12" textAnchor="middle" fill="#0c3fc0" fontFamily="Liberation Sans, sans-serif" transform="rotate(-90 746 573)">5980.0</text>
            <EqMark x={763} y={571} />
            <EqMark x={961} y={722} />
        </Drawing>
    );
}

const LogoMark = () => (
    <svg width="22" height="25" viewBox="0 0 22 25">
        <path fillRule="evenodd" d="M3 1h9c5 0 8 3 8 7 0 3-2 5-5 6l6 10h-4l-6-9H6v9H3zM6 4v8h6c3 0 5-2 5-4s-2-4-5-4z" fill="#2f72b8" stroke="#1d4f86" strokeWidth=".5" />
    </svg>
);

export default function App() {
    return (
        <Screen>
            <GlobalStyle />
            <TitleBar>
                <TitleTools>
                    <RunSlot $w={22} $gap={7}>
                        <LogoMark />
                    </RunSlot>
                    <IconRun items={qatLeft} origin={29} />
                    <RunSlot $w={1} $gap={9}><Divider /></RunSlot>
                    <IconRun items={qatMid} origin={297} />
                    <RunSlot $w={1} $gap={9}><Divider /></RunSlot>
                    <IconRun items={qatEnd} origin={441} />
                    <RunSlot $w={1} $gap={8}><Divider /></RunSlot>
                    <IconRun items={qatLast} origin={554} />
                </TitleTools>
                <TitleText>Autodesk Revit 2019.2 - 01.2_Home_ - Drafting View: Drafting 1</TitleText>
                <TitleTools>
                    <IconRun items={[["caret", 1248, 8]]} origin={1244} />
                    <SearchBox>Type a keyword or phrase</SearchBox>
                    <IconRun items={qatRight} origin={1482} />
                    <SignIn>Sign In</SignIn>
                    <IconRun items={winButtons} origin={1658} />
                    <RunSlot $w={1} $gap={11}><Divider /></RunSlot>
                    <IconRun items={winRest} origin={1762} />
                </TitleTools>
            </TitleBar>

            <TabStrip>
                <FileTab>File</FileTab>
                <TabList>
                    {ribbonTabs.map((t) => (
                        <span key={t}>{t}</span>
                    ))}
                </TabList>
                <ContextTab>Modify | Detail Items</ContextTab>
                <ToggleSlot>
                    <Icon name="panelToggle" size={19} />
                    <NavlessCaret />
                </ToggleSlot>
            </TabStrip>

            <Ribbon>
                <Panel $w={72}>
                    <PanelBody>
                        <ModifyButton>
                            <Icon name="pointer" size={24} />
                            <span>Modify</span>
                        </ModifyButton>
                    </PanelBody>
                    <PanelLabel>
                        Select
                        <NavlessCaret />
                    </PanelLabel>
                </Panel>
                <Panel $w={80}>
                    <PanelBody>
                        <StackCenter>
                            <Icon name="familyType" size={40} />
                            <PressedSquare>
                                <Icon name="propPanel" size={32} />
                            </PressedSquare>
                        </StackCenter>
                    </PanelBody>
                    <PanelLabel>Properties</PanelLabel>
                </Panel>
                <Panel $w={99}>
                    <PanelBody>
                        <StackCenter $w={66}>
                            <Icon name="paste" size={40} />
                            <MutedWord>Paste</MutedWord>
                            <NavlessCaret />
                        </StackCenter>
                        <Cells $cols="33px" $rows="repeat(3, 31px)">
                            <Icon name="scissors" size={21} />
                            <Icon name="copy" size={21} />
                            <Icon name="match" size={21} />
                        </Cells>
                    </PanelBody>
                    <PanelLabel>Clipboard</PanelLabel>
                </Panel>
                <Panel $w={179}>
                    <PanelBody>
                        <Cells $cols="99px 30px 30px 20px" $rows="repeat(3, 31px)">
                            <ToolRow><Icon name="notch" size={22} />Notch<ToolCaret /></ToolRow>
                            <Icon name="wallJoin" size={20} />
                            <Icon name="wallFace" size={20} />
                            <span />
                            <ToolRow><Icon name="cutGeo" size={22} />Cut<ToolCaret /></ToolRow>
                            <Icon name="offsetFace" size={20} />
                            <Icon name="joinCut" size={20} />
                            <NavlessCaret />
                            <ToolRow><Icon name="joinGeo" size={22} />Join<ToolCaret /></ToolRow>
                            <Icon name="paint" size={21} />
                            <Icon name="hammer" size={20} />
                        </Cells>
                    </PanelBody>
                    <PanelLabel>Geometry</PanelLabel>
                </Panel>
                <Panel $w={299}>
                    <PanelBody>
                        <Cells $cols="1px repeat(4, 50px)" $rows="repeat(2, 44px)" $top={3}>
                            <span /><Icon name="alignTool" size={38} />
                            <Icon name="offsetTool" size={38} />
                            <Icon name="mirrorPick" size={38} />
                            <Icon name="mirrorDraw" size={38} />
                            <span /><Icon name="move" size={36} />
                            <Icon name="copyTool" size={36} />
                            <Icon name="rotate" size={36} />
                            <Icon name="trim" size={38} />
                        </Cells>
                        <Cells $cols="repeat(3, 32px)" $rows="repeat(3, 31px)">
                            <Icon name="splitTool" size={20} />
                            <Icon name="gapTool" size={20} />
                            <Icon name="unpin" size={20} />
                            <Icon name="array" size={20} />
                            <Icon name="scale" size={20} />
                            <Icon name="pin" size={20} />
                            <Icon name="extend1" size={20} />
                            <Icon name="extend2" size={20} />
                            <Icon name="deleteX" size={20} />
                        </Cells>
                    </PanelBody>
                    <PanelLabel>Modify</PanelLabel>
                </Panel>
                <Panel $w={81}>
                    <PanelBody>
                        <Cells $cols="8px 22px 16px 30px" $rows="repeat(3, 31px)">
                            <span /><Icon name="bulb" size={22} /><NavlessCaret /><Icon name="hideIso" size={22} />
                            <span /><Icon name="brush" size={22} /><NavlessCaret /><Icon name="graphics" size={22} />
                            <span /><Icon name="wire" size={22} />
                        </Cells>
                    </PanelBody>
                    <PanelLabel>View</PanelLabel>
                </Panel>
                <Panel $w={70}>
                    <PanelBody>
                        <Cells $cols="52px 14px" $rows="repeat(2, 44px)" $top={3}>
                            <Icon name="ruler" size={38} />
                            <NavlessCaret />
                            <Icon name="align2" size={38} />
                            <NavlessCaret />
                        </Cells>
                    </PanelBody>
                    <PanelLabel>Measure</PanelLabel>
                </Panel>
                <Panel $w={103}>
                    <PanelBody>
                        <Cells $cols="52px 46px" $rows="repeat(2, 44px)" $top={3}>
                            <Icon name="createGroupOff" size={38} />
                            <Icon name="createSimilar" size={38} />
                            <Icon name="partsOff" size={40} />
                            <Icon name="flow" size={38} />
                        </Cells>
                    </PanelBody>
                    <PanelLabel>Create</PanelLabel>
                </Panel>
                <Panel $w={73} $space={4}>
                    <PanelBody>
                        <StackCenter>
                            <Icon name="editBoundary" size={44} />
                            <BigToolText>Edit<br />Boundary</BigToolText>
                        </StackCenter>
                    </PanelBody>
                    <PanelLabel $ctx>Mode</PanelLabel>
                </Panel>
                <Panel $w={162} $space={4}>
                    <PanelBody>
                        <BigTool>
                            <Icon name="front" size={40} />
                            <BigToolText>Bring to<br />Front</BigToolText>
                            <BigToolCaret />
                        </BigTool>
                        <BigTool>
                            <Icon name="back" size={40} />
                            <BigToolText>Send to<br />Back</BigToolText>
                            <BigToolCaret />
                        </BigTool>
                    </PanelBody>
                    <PanelLabel $ctx>Arrange</PanelLabel>
                </Panel>
            </Ribbon>

            <OptionsBar>Modify | Detail Items</OptionsBar>

            <Workspace>
                <Dock $w={333}>
                    <DockHeader $inset={4} $end={6}>
                        Properties
                        <Icon name="close" size={16} />
                    </DockHeader>
                    <TypeCard>
                        <TypeThumb />
                        <TypeName>
                            Filled region
                            <br />
                            Інженерна дошка
                        </TypeName>
                        <TypeCaret />
                    </TypeCard>
                    <SelectorRow>
                        <Select $w={232}>
                            Detail Items (1)
                            <Chevron />
                        </Select>
                        <EditType>
                            <Icon name="editType" size={17} />
                            Edit Type
                        </EditType>
                    </SelectorRow>
                    <GroupRow>
                        Dimensions
                        <Icon name="collapse" size={10} />
                    </GroupRow>
                    <PropRow>
                        <PropName $muted>Area</PropName>
                        <PropValue $muted>18.185 m²</PropValue>
                        <PropExtra />
                    </PropRow>
                    <GroupRow>
                        Identity Data
                        <Icon name="collapse" size={10} />
                    </GroupRow>
                    <PropRow>
                        <PropName>Image</PropName>
                        <PropValue $active />
                        <PropExtra />
                    </PropRow>
                    <PropRow>
                        <PropName>Comments</PropName>
                        <PropValue />
                        <PropExtra />
                    </PropRow>
                    <PropRow>
                        <PropName>Mark</PropName>
                        <PropValue />
                        <PropExtra />
                    </PropRow>
                    <PropRow>
                        <PropName>Вариант</PropName>
                        <PropValue />
                        <PropExtra>
                            <Knob />
                        </PropExtra>
                    </PropRow>
                    <PropsFill />
                    <PropsFooter>
                        <HelpLink>Properties help</HelpLink>
                        <ApplyButton>Apply</ApplyButton>
                    </PropsFooter>
                </Dock>

                <Dock $w={331}>
                    <DockHeader $inset={3} $end={4}>
                        Project Browser - 01.2_Home_
                        <Icon name="close" size={16} />
                    </DockHeader>
                    <TreeArea>
                        <Tree>
                            <Guide $x={10} $top={0} />
                            <Guide $x={36} $top={0} />
                            <Guide $x={62} $top={110} />
                            {browserRows.map((r) => (
                                <TreeRow key={r.label} $depth={r.depth}>
                                    <Expander $open={r.open} />
                                    <Leader $w={r.kind ? 8 : 13} />
                                    {r.kind && <Icon name={r.kind} size={20} />}
                                    {r.kind ? <TreeIconLabel>{r.label}</TreeIconLabel> : <span>{r.label}</span>}
                                </TreeRow>
                            ))}
                        </Tree>
                        <TreeScroll>
                            <TreeThumb />
                        </TreeScroll>
                    </TreeArea>
                    <HScrollTrack>
                        <HScrollThumb />
                    </HScrollTrack>
                </Dock>

                <ViewColumn>
                    <ViewTabs>
                        {viewTabs.map(([label, w]) => (
                            <ViewTab key={label} $w={w}>
                                <Icon name="sheet" size={19} />
                                {label}
                            </ViewTab>
                        ))}
                        <ActiveTab>
                            <Icon name="drafting" size={21} />
                            Drafting 1
                            <ActiveTabClose>
                                <Icon name="close" size={16} />
                            </ActiveTabClose>
                        </ActiveTab>
                        <TabMenu>
                            <Icon name="menu" size={13} />
                        </TabMenu>
                    </ViewTabs>
                    <ViewMiddle>
                        <Canvas>
                            <Plan />
                            <NavBar>
                                <NavDot />
                                <svg width="28" height="26" viewBox="0 0 28 26">
                                    <rect x="1" y="2" width="17" height="17" rx="6" fill="#eee" stroke="#b0b0b0" strokeWidth="1.5" />
                                    <circle cx="9.5" cy="10.5" r="5" fill="none" stroke="#b0b0b0" strokeWidth="1.5" />
                                    <text x="18" y="24" fontSize="9.5" fontWeight="700" textAnchor="middle" fill="#3a86c8" fontFamily="Liberation Sans, sans-serif">2D</text>
                                </svg>
                                <NavCaret />
                                <NavRule />
                                <svg width="18" height="18" viewBox="0 0 18 18">
                                    <path d="M2 2l9 9M2 2h3M2 2v3M10 2 2 10M10 2H7M2 10V7" fill="none" stroke="#b0b0b0" />
                                    <circle cx="12" cy="12" r="3.6" fill="#eee" stroke="#8a8a8a" strokeWidth="1.4" />
                                    <path d="M15 15l3 3" stroke="#8a8a8a" strokeWidth="1.8" />
                                </svg>
                                <NavCaret />
                                <NavDot $bottom />
                            </NavBar>
                        </Canvas>
                        <VStrip>
                            <VThumb />
                        </VStrip>
                    </ViewMiddle>
                    <ViewBar>
                        <ScaleText>1 : 10</ScaleText>
                        <IconRun items={viewBarIcons} origin={755} />
                        <HThumb />
                    </ViewBar>
                </ViewColumn>
            </Workspace>

            <StatusBar>
                <StatusText>Detail Items : Filled region : Detail Filled Region</StatusText>
                <IconRun items={[["worksets", 699, 21]]} origin={688} />
                <StatusField $w={254} $h={23} $space={7}>
                    <span />
                    <Chevron />
                </StatusField>
                <IconRun items={[["editReq", 987, 20]]} origin={971} />
                <StatusLabel $space={3}>:0</StatusLabel>
                <IconRun items={[["wsA", 1050, 21], ["wsB", 1079, 21]]} origin={1011} />
                <StatusField $w={253} $h={23} $space={8}>
                    Main Model
                    <Chevron />
                </StatusField>
                <IconRun items={[["check", 1371, 18]]} origin={1351} />
                <StatusLabel $space={6}>Exclude Options</StatusLabel>
                <IconRun items={statusIcons} origin={1494} />
                <StatusLabel $space={1}>:1</StatusLabel>
            </StatusBar>
        </Screen>
    );
}

const NavlessCaret = styled(ToolCaret)`
    margin-left: 0;
`;

const StatusField = styled(Select)<{ $space: number }>`
    margin-left: ${(p) => p.$space}px;
`;
